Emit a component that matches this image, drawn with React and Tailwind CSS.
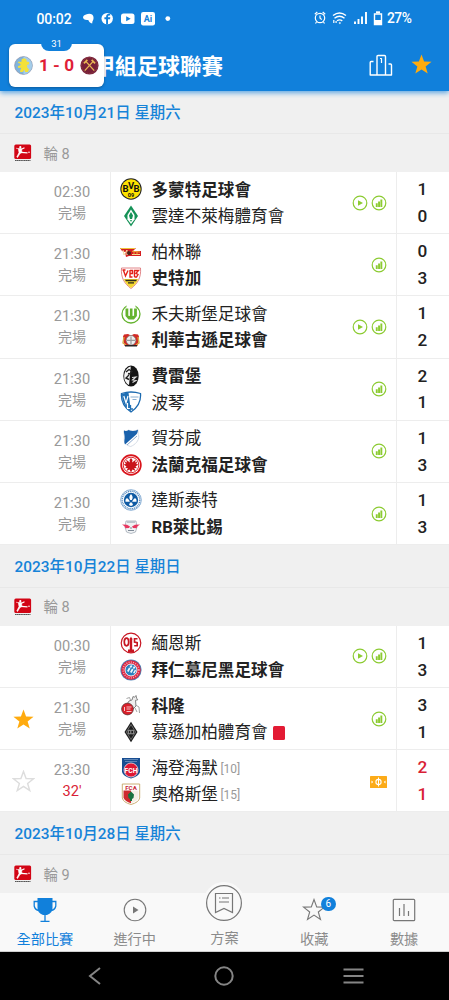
import React from "react";
import clsx from "clsx";

const STAR = "M12 1.5l2.7 7.4 7.8.2-6.2 4.9 2.2 7.5-6.5-4.4-6.5 4.4 2.2-7.5L1.5 9.1l7.8-.2z";

const sections = [
  {
    date: "2023年10月21日 星期六",
    round: "輪 8",
    matches: [
      { time: "02:30", home: ["多蒙特足球會", "dortmund", 1], away: ["雲達不萊梅體育會", "bremen", 0], video: true },
      { time: "21:30", home: ["柏林聯", "union", 0], away: ["史特加", "stuttgart", 3] },
      { time: "21:30", home: ["禾夫斯堡足球會", "wolfsburg", 1], away: ["利華古遜足球會", "leverkusen", 2], video: true },
      { time: "21:30", home: ["費雷堡", "freiburg", 2], away: ["波琴", "bochum", 1] },
      { time: "21:30", home: ["賀芬咸", "hoffenheim", 1], away: ["法蘭克福足球會", "frankfurt", 3] },
      { time: "21:30", home: ["達斯泰特", "darmstadt", 1], away: ["RB萊比錫", "leipzig", 3] },
    ],
  },
  {
    date: "2023年10月22日 星期日",
    round: "輪 8",
    matches: [
      { time: "00:30", home: ["緬恩斯", "mainz", 1], away: ["拜仁慕尼黑足球會", "bayern", 3], video: true },
      { time: "21:30", home: ["科隆", "koln", 3], away: ["慕遜加柏體育會", "gladbach", 1], star: "on", redCard: true },
      { time: "23:30", live: "32'", home: ["海登海默", "heidenheim", 2, "[10]"], away: ["奧格斯堡", "augsburg", 1, "[15]"], star: "off" },
    ],
  },
  { date: "2023年10月28日 星期六", round: "輪 9", matches: [] },
];

const logos = {
  dortmund: (
    <>
      <circle cx="11" cy="11" r="10.7" fill="#222" />
      <circle cx="11" cy="11" r="9.7" fill="#fde100" />
      <g fill="#111" fontFamily="Roboto" fontWeight="700" textAnchor="middle">
        <text x="5.5" y="14.2" fontSize="9.5">B</text>
        <text x="11" y="11.2" fontSize="9.5">V</text>
        <text x="16.5" y="14.2" fontSize="9.5">B</text>
        <text x="11" y="19.4" fontSize="5.5">09</text>
      </g>
    </>
  ),
  bremen: (
    <>
      <path d="M11 .5L18 11l-7 10.5L4 11z" fill="#159257" />
      <path d="M11 4.5L14.500 10v4.500L11 19l-3.500-4.500V10z" fill="#fff" />
      <path d="M11 7l2 3.500-1 3.500h-2l-1-3.500zM10 15l1 2 1-2z" fill="#159257" />
    </>
  ),
  union: (
    <>
      <path d="M0 7h16l-3 3h8v5H9l-3 1-1-5L2 10z" fill="#d51d20" />
      <path d="M0 7h15v1H1z" fill="#eec33c" />
      <path d="M3 9l1 5 3-5v5l3-4M12 13.5h8" stroke="#f6d9a0" strokeWidth="1" fill="none" />
      <circle cx="9" cy="12" r="2" fill="#4b221a" />
      <path d="M12 10.2l8 .8M14 11v3m3-3v3" stroke="#f4d049" strokeWidth=".8" />
    </>
  ),
  stuttgart: (
    <>
      <path d="M1.5 1h19c.8 9-2.5 15.5-9.500 20.500C4 16.500.7 10 1.500 1z" fill="#fff" stroke="#d9686c" strokeWidth=".8" />
      <path d="M3.500 3.500l2 5.500L8 3.500M2.500 3h3M10 3v7h2.500M10 3.500h2.500v3H10M14.500 3.500v6.500M14 3.500h4.500L16 6.300l2 1.200-1.500 2.500h-2" stroke="#e32219" strokeWidth="1.400" fill="none" />
      <path d="M3.800 12h14.400c-1.500 4-3.500 6.500-7.200 9-3.700-2.500-5.700-5-7.200-9z" fill="#f5d72f" />
      <path d="M5 12.700h12l-1 1.500H6zm3 2.500h6v1.300H8z" fill="#2a2a1e" />
    </>
  ),
  wolfsburg: (
    <>
      <circle cx="11" cy="11" r="9" fill="none" stroke="#64b32e" strokeWidth="1.300" />
      <path d="M6.500 1h9v3h-9z" fill="#fff" />
      <path d="M5.500 5.500h2.800v7.300l1.600.1V5.500h2.600v7.400l1.600-.2V5.500h2.800V13l-3 3.500H8.500L5.500 13z" fill="#64b32e" />
    </>
  ),
  leverkusen: (
    <>
      <path d="M4 5.500l4-.5 3 1.500L14 5l4 .5 1 2-1.500 9.500h-13L3 7.500z" fill="#d32a25" />
      <path d="M4 8l-1 6 3 2M18 8l1 6-3 2" stroke="#d8a643" strokeWidth="1.400" fill="none" />
      <circle cx="11" cy="11.300" r="4.800" fill="#eee" stroke="#777" strokeWidth=".7" />
      <path d="M11 7.500v8M7 11.300h8" stroke="#999" strokeWidth="1.200" />
      <path d="M5 16h12v1.500H5z" fill="#292323" />
    </>
  ),
  freiburg: (
    <>
      <ellipse cx="11" cy="11" rx="7.700" ry="10.500" fill="#151515" />
      <path d="M10.800 1.500L9 20C5 18 4.200 14 4.200 11s1.800-8.500 6.600-9.500z" fill="#f6f6f6" />
      <path d="M6 7l3-2.500 3 2-2.500 2.500L8 8.500M9 10l-3 3 3 1.500" fill="none" stroke="#222" strokeWidth="1.400" />
      <path d="M12 12.500l4-.5-3.500 3 3.500.5-3.500 2" fill="none" stroke="#ddd" strokeWidth="1.100" />
    </>
  ),
  bochum: (
    <>
      <path d="M1.500 2.500Q11-.5 20.500 2.500 21.500 14 11 21 .5 14 1.500 2.500z" fill="#fff" stroke="#1c6ab0" strokeWidth="1.300" />
      <path d="M2 3Q5 1.800 8.500 1.500L11 20.500Q1.500 14 2 3z" fill="#1f6fb4" />
      <path d="M3.800 5l2.200 7 2-7M7.500 12v5.500h2.500" stroke="#fff" strokeWidth="1.200" fill="none" />
      <path d="M10.500 6h8M12.500 8.500h4" stroke="#8aaed0" strokeWidth="1" />
      <path d="M10.500 14v4h2.500" stroke="#1f6fb4" strokeWidth="1.300" fill="none" />
    </>
  ),
  hoffenheim: (
    <>
      <path d="M4 3.500c2 .8 3 .8 4.500-.5 3 1.500 6 1.500 9.500-.3.400 2.800-.4 4 .8 6.300 0 5-3.500 8.500-8 10.500-4.500-1-7-3.500-6.500-8C5 9 3.500 6 4 3.500z" fill="#fff" stroke="#c6cedb" strokeWidth=".7" />
      <path d="M4 3.500c2 .8 3 .8 4.500-.5 3 1.500 6 1.500 9.500-.3-.3 3-1 3.800-2 5L5 17.500c-1-2-.6-3.500-.3-6.500C5 8 3.500 6 4 3.500z" fill="#1961ac" />
      <path d="M7 18l10-9" stroke="#8da9cd" strokeWidth="1" />
    </>
  ),
  frankfurt: (
    <>
      <circle cx="11" cy="11" r="10.700" fill="#d9141b" />
      <circle cx="11" cy="11" r="9" fill="#fff" />
      <circle cx="11" cy="11" r="7.800" fill="#fff" stroke="#d9141b" strokeWidth=".9" />
      <path d="M11 4l1.500 2-.4 2.500L16 5.500l-1 3 2.500-1.200-1.300 2.800 2.300.4-3 2 1.500 1.800-2.800-.3L15.500 17l-3-1.500L11 18.500l-1.500-3-3 1.500 1.300-3-2.800.3 1.500-1.800-3-2 2.300-.4-1.300-2.800L7 8.500l-1-3 3.900 3L9.500 6z" fill="#c9151b" />
    </>
  ),
  darmstadt: (
    <>
      <circle cx="11" cy="11" r="10.300" fill="#fff" stroke="#6b9bc9" strokeWidth=".8" />
      <circle cx="11" cy="11" r="8.800" fill="none" stroke="#5c8fc2" strokeWidth="1.400" strokeDasharray="1.200 .7" />
      <circle cx="11" cy="11" r="7.200" fill="#0f5ba4" />
      <path d="M11 5c2.200 2.500 2 4 .8 6h-1.600C9 9 8.800 7.500 11 5zM9.800 12.800H5.500c-.5-3 1.500-4.300 2.700-2.800C9 11 9.500 11.500 9.800 12.800zm2.400 0h4.300c.5-3-1.500-4.300-2.700-2.800-.8 1-1.300 1.500-1.600 2.800zM10 13.500h2l1 2.500-2 1-2-1z" fill="#fff" />
    </>
  ),
  leipzig: (
    <>
      <path d="M6 5h10l1 6-1.500 5-4.500 1.500L6.500 16 5 11z" fill="#f1f3f5" stroke="#98a2ad" strokeWidth=".7" />
      <path d="M7 5h8v2H7z" fill="#bec6cd" />
      <path d="M2 8.500l5 .3 3 1.700-1 1.500-3.500.2-1-1.900zM20 8.500l-5 .3-3 1.700 1 1.500 3.500.2 1-1.900z" fill="#e8365f" />
      <path d="M8 14.500h6M11 11v2" stroke="#7e8a97" strokeWidth="1" />
    </>
  ),
  mainz: (
    <>
      <circle cx="11" cy="11" r="9.800" fill="#fff" stroke="#c71521" strokeWidth="1.200" />
      <ellipse cx="6.500" cy="10" rx="2.200" ry="3.800" fill="none" stroke="#c71521" strokeWidth="1.700" />
      <path d="M11 6v13" stroke="#c71521" strokeWidth="2.400" />
      <path d="M9.500 7.500L11 4.500l1.500 3zM8 17.500h6v3H8z" fill="#c71521" />
      <path d="M17.500 6.800h-3v3.200l2.700.6v3.200h-3" fill="none" stroke="#c71521" strokeWidth="1.600" />
    </>
  ),
  bayern: (
    <>
      <circle cx="11" cy="11" r="10.600" fill="#4b83b8" />
      <circle cx="11" cy="11" r="9.800" fill="#dc2742" />
      <circle cx="11" cy="11" r="7.900" fill="none" stroke="#f0a9b4" strokeWidth="1.500" strokeDasharray="1 1.300" />
      <circle cx="11" cy="11" r="6" fill="#2b80be" stroke="#fff" strokeWidth=".9" />
      <path d="M7 12l2-3.500 1.500 1L8.500 13zM10 13l2-3.500 1.500 1-2 3.500zM13 14l2-3.500 1 1-1.500 3zM9.500 8l1.500-2 1.500 1L11 9zM12.800 9l1.200-2 1.500 1.500L14 10z" fill="#eef6fb" />
    </>
  ),
  koln: (
    <>
      <path d="M7.500 9.500L9 7l3-1 1-3.500 1.500.8L16 1.500l.6 2.700 1.200 1.600-2.300.5L16 12l-3 3" fill="#eee" stroke="#777" strokeWidth=".9" />
      <path d="M6.500 4.500l3-1 1 2.500M15.500 11l3.500 2 .5 6M15 14l2 4" fill="none" stroke="#999" strokeWidth=".9" />
      <circle cx="7.500" cy="15" r="5.900" fill="#d81f2a" stroke="#4b3535" strokeWidth=".7" />
      <path d="M4.500 13v4m2-4h5m-5 4.500h5M6.500 15h4" stroke="#f9c5c8" strokeWidth="1" />
    </>
  ),
  gladbach: (
    <>
      <path d="M11 .8L17.500 11 11 21.200 4.500 11z" fill="#1d1d1d" />
      <path d="M11 3.500l4.600 7.500-4.600 7.500L6.400 11z" fill="none" stroke="#888" strokeWidth=".7" />
      <path d="M8.300 9.300h2.500v3.500H8.300zm2.900 0h2.500v3.500h-2.500" stroke="#aaa" strokeWidth=".9" fill="none" />
    </>
  ),
  heidenheim: (
    <>
      <path d="M2 1h18v14q-1 4-9 6.500Q3 19 2 15z" fill="#174d91" />
      <path d="M4 2.500h14M5 4.500h12" stroke="#7d9fc7" strokeWidth=".7" />
      <circle cx="11" cy="13" r="7" fill="#df1733" stroke="#f5dce5" strokeWidth=".8" />
      <text x="11" y="15.500" fontSize="6.800" fontWeight="700" fontFamily="Roboto" textAnchor="middle" fill="#fff">FCH</text>
    </>
  ),
  augsburg: (
    <>
      <path d="M2.300 1h17.400v14q-1 4.500-8.700 6.500-7.700-2-8.700-6.500z" fill="#fff" stroke="#c5a566" strokeWidth=".9" />
      <path d="M3.500 7.500H11v12.800q-6-1.800-7.500-5.500z" fill="#ce2a2d" />
      <path d="M11 7.500h7.500v7.300Q17 18.500 11 20.300z" fill="#f5eee5" />
      <text x="11" y="6.600" fontSize="6.200" fontWeight="700" fontFamily="Roboto" textAnchor="middle" fill="#c72533">FCA</text>
      <path d="M11 8.500l3 3-.5 3.500-1.500 1v2h-2v-2l-1.500-1-.5-3.500z" fill="#19713e" />
    </>
  ),
  villa: (
    <>
      <circle cx="11" cy="11" r="10.300" fill="#80b4dd" stroke="#8d90a5" strokeWidth=".8" />
      <path d="M11 1a10 10 0 010 20z" fill="#a5cde9" />
      <path d="M9 3.500l3-1 2.500 1.500v2.500l3 .5v2.500l-2.500 1 .5 3 2 2-1.500 3h-3l-1-2.500-2 2.500H7l.5-3 1-2-3.500.5-.5-2 3.500-1.500-1.500-2-2-.5 1-1.500 3 .5z" fill="#f4e138" />
    </>
  ),
  westham: (
    <>
      <circle cx="11" cy="11" r="10.500" fill="#772038" />
      <circle cx="11" cy="11" r="9.200" fill="none" stroke="#a95f58" strokeWidth=".7" strokeDasharray="1 1" />
      <path d="M5.500 17L15.500 6M16.500 17L6.500 6" stroke="#e8b854" strokeWidth="1.500" />
      <path d="M4.500 8.500l4-4M17.500 8.500l-4-4" stroke="#e8b854" strokeWidth="2" />
    </>
  ),
};

function TeamLogo({ id, className = "w-[22px] h-[22px]" }) {
  return (
    <svg viewBox="0 0 22 22" className={clsx("shrink-0", className)}>
      {logos[id]}
    </svg>
  );
}

function LeagueLogo() {
  return (
    <svg viewBox="0 0 18 18" className="w-[18px] h-[18px] shrink-0">
      <rect x=".3" y=".5" width="16.800" height="14.500" rx="1.500" fill="#d20515" />
      <circle cx="6.300" cy="3.200" r="1.100" fill="#fff" />
      <path d="M2 4.200l2.500.6M4.300 4.500h3L8 8.500 6 9.500 3.500 13.500 2.800 13 5 8.500z" fill="#fff" stroke="#fff" strokeWidth=".6" />
      <path d="M7 5.500l3.500-1.800M7 8.300l6.500.5" stroke="#fff" strokeWidth="1.200" fill="none" />
      <circle cx="15" cy="8.200" r=".8" fill="#fff" />
      <path d="M1 16.500h15.500" stroke="#555" strokeWidth="1.200" strokeDasharray="1.500 .3" />
    </svg>
  );
}

function PlayBadge() {
  return (
    <svg viewBox="0 0 16 16" className="w-4 h-4">
      <circle cx="8" cy="8" r="6.800" fill="none" stroke="#8ccb32" strokeWidth="1.200" />
      <path d="M6 5.200L11 8l-5 2.800z" fill="#8ccb32" />
    </svg>
  );
}

function StatsBadge() {
  return (
    <svg viewBox="0 0 16 16" className="w-4 h-4">
      <circle cx="8" cy="8" r="6.800" fill="none" stroke="#8ccb32" strokeWidth="1.200" />
      <path d="M4.800 8.300h1.900v3.600H4.800zM7.100 6.500H9v5.400H7.100zM9.400 4.400h1.900v7.500H9.400z" fill="#8ccb32" />
    </svg>
  );
}

function LivePitch() {
  return (
    <svg viewBox="0 0 17 12" className="w-[17px] h-3 mt-0.5">
      <rect width="17" height="12" rx=".6" fill="#fcab18" />
      <circle cx="8.500" cy="6" r="2.600" fill="none" stroke="#fff" strokeWidth="1.100" />
      <path d="M8.500 1.500v9" stroke="#fff" strokeWidth="1" />
      <path d="M1.500 4.500v3L3.200 6zM15.500 4.500v3L13.800 6z" fill="#fff" />
    </svg>
  );
}

function StatusBar() {
  return (
    <div className="h-[38px] flex items-center pl-[36.500px] pr-9 text-white">
      <span className="text-[14px] font-medium leading-none tracking-[-0.1px]">00:02</span>
      <svg viewBox="0 0 90 16" className="w-[90px] h-4 ml-2.5" fill="#fff">
        <path d="M4 3.500c3-1.500 7-1 7.500 2.500.5 3-1.500 4-1.300 6.500C8 12 7 11 6.300 9 3 9.500 1 8 1 6.300 1 5 2.500 4 4 3.500z" />
        <circle cx="25.200" cy="7.600" r="5.700" />
        <path d="M26 13.300V8.300h2l.3-2H26c-.1-1.500.5-2 2.200-1.700V2.900C25.500 2.300 24 3.500 24.100 6.300h-1.700v2h1.700v5z" fill="#1180db" />
        <rect x="39" y="2.500" width="13.500" height="10.500" rx="2.500" />
        <path d="M44.200 5.200l4.500 2.500-4.500 2.500z" fill="#1180db" />
        <rect x="59" y="1" width="14" height="13.500" rx="2.200" />
        <text x="66" y="11" textAnchor="middle" fontFamily="Roboto" fontSize="9" fontWeight="700" fill="#1180db">Ai</text>
        <circle cx="85.800" cy="7.600" r="2.400" />
      </svg>
      <svg viewBox="0 0 70 16" className="w-[70px] h-4 ml-auto mr-[3.500px] mb-0.5" fill="none" stroke="#fff">
        <circle cx="6" cy="8" r="4.700" strokeWidth="1.200" />
        <path d="M6 5.500V8l1.700 1.700M.8 4.300L3.300 2M11.200 4.300L8.700 2M2.500 12l-1 1.500M9.500 12l1 1.500" strokeWidth="1.200" />
        <path d="M19 5.500Q25.500.5 32 5.500M20.500 8.300Q25.500 4.300 30.500 8.300M23 10.800Q25.500 9 28.300 10.800" strokeWidth="1.400" />
        <path d="M19.800 10v3m2.300-2v2" strokeWidth="1.200" />
        <circle cx="25.800" cy="13" r=".8" fill="#fff" strokeWidth=".3" />
        <path d="M41 14v-2.500M44.500 14V9M48 14V6.500M52 14V2" strokeWidth="1.900" />
        <path d="M60.500 4h7v10.500h-7z" strokeWidth="1.400" />
        <path d="M62 2.300h4" strokeWidth="2" />
        <path d="M60.800 10.500h6.500V14h-6.500z" fill="#fff" />
      </svg>
      <span className="w-[26px] text-[13.800px] font-medium leading-none tracking-[-0.5px] whitespace-nowrap">27%</span>
    </div>
  );
}

function FloatingScore() {
  return (
    <div className="absolute left-[9px] top-[44px] w-[95px] h-[43px] bg-white rounded-md shadow-[0_1px_3px_rgba(0,0,0,0.3)] flex items-center justify-between px-[5px] z-20">
      <span className="absolute left-[32px] top-[-7px] w-[31px] h-[14px] rounded-b-lg bg-[#1180db] text-white text-[9.500px] leading-[14px] text-center">
        31
      </span>
      <TeamLogo id="villa" className="w-[19px] h-[19px]" />
      <span className="text-[17.200px] font-bold text-[#e01e37] leading-none whitespace-nowrap">1 - 0</span>
      <TeamLogo id="westham" className="w-[19px] h-[19px]" />
    </div>
  );
}

function Header() {
  return (
    <header className="relative z-10 h-[91px] shrink-0 bg-[#1180db] shadow-[0_2px_5px_rgba(17,128,219,0.65)]">
      <StatusBar />
      <div className="h-[53px] flex items-center pl-[93.500px] pr-4">
        <h1 className="text-[21.600px] font-bold text-white leading-none whitespace-nowrap mt-1">甲組足球聯賽</h1>
        <svg viewBox="0 0 24 22" className="w-6 h-[22px] ml-auto" fill="none" stroke="#fff" strokeWidth="1.400" strokeLinejoin="round">
          <path d="M8 21H1.200V8.500q0-1 1-1h2.300M8 21V2.500q0-1 1-1h6.500q1 0 1 1V21M8 21h8.500M19.500 10h2q1 0 1 1v10h-6" />
          <path d="M11 4.500h1.500V9" strokeWidth="1.200" />
        </svg>
        <svg viewBox="0 0 24 24" className="w-[23px] h-[23px] ml-[17px]">
          <path d={STAR} fill="#ffab0f" />
        </svg>
      </div>
      <FloatingScore />
    </header>
  );
}

function TeamRow({ team, winner, redCard }) {
  const [name, logo, , rank] = team;
  return (
    <div className="h-[26.500px] flex items-center">
      <TeamLogo id={logo} />
      <span className={clsx("ml-[9.500px] mt-[3px] text-[16.600px] leading-none whitespace-nowrap text-[#222]", winner ? "font-bold" : "font-normal")}>
        {name}
      </span>
      {rank && <span className="ml-[2.500px] mt-0.5 text-[12px] leading-none text-[#999]">{rank}</span>}
      {redCard && <span className="ml-[5px] mt-0.5 w-[12.500px] h-[14.500px] rounded-[1.500px] bg-[#e31b34]" />}
    </div>
  );
}

function MatchRow({ match }) {
  const { time, live, home, away, video, star, redCard } = match;
  return (
    <div className="h-[62.200px] flex bg-white border-b border-[#ededed]">
      <div className="w-[34px] pl-3 flex items-center shrink-0">
        {star && (
          <svg viewBox="0 0 24 24" className="w-[23px] h-[23px] mt-px shrink-0">
            <path d={STAR} fill={star === "on" ? "#ffab0f" : "none"} stroke={star === "on" ? "none" : "#ddd"} strokeWidth="1.500" />
          </svg>
        )}
      </div>
      <div className="w-[77px] shrink-0 border-r border-[#ededed] flex flex-col items-center pt-[10px] text-[14.600px] leading-[21px] text-[#999]">
        <span>{time}</span>
        <span className={live ? "text-[#d91e36]" : "text-[14px]"}>{live || "完場"}</span>
      </div>
      <div className="flex-1 pl-[9px] pt-[4px] flex flex-col">
        <TeamRow team={home} winner={!live && home[2] > away[2]} />
        <TeamRow team={away} winner={!live && away[2] > home[2]} redCard={redCard} />
      </div>
      <div className="flex items-center gap-[3.500px] pr-[9px]">
        {video && <PlayBadge />}
        {live ? <LivePitch /> : <StatsBadge />}
      </div>
      <div className={clsx("w-[53px] shrink-0 border-l border-[#ededed] flex flex-col items-center pt-[4px] pr-px text-[17.200px] font-medium leading-[26.800px]", live ? "text-[#d91e36]" : "text-[#222]")}>
        <span>{home[2]}</span>
        <span>{away[2]}</span>
      </div>
    </div>
  );
}

function Section({ section }) {
  return (
    <section>
      <div className="h-[42.300px] flex items-center pl-[14.500px] pt-[3px] border-b border-[#e8e8e8] text-[15.400px] font-medium text-[#1683d8]">
        {section.date}
      </div>
      <div className="h-[38.400px] flex items-center pl-3.5 text-[#999]">
        <LeagueLogo />
        <span className="ml-[11.500px] mt-[3px] text-[14.500px]">{section.round}</span>
      </div>
      {section.matches.map((m) => (
        <MatchRow key={m.home[0]} match={m} />
      ))}
    </section>
  );
}

function NavItem({ label, active, children }) {
  return (
    <div className={clsx("flex-1 relative flex flex-col items-center pt-[5px]", active ? "text-[#1180db]" : "text-[#8b8b8b]")}>
      {children}
      <span className="mt-[7px] text-[14.200px] leading-[20px] whitespace-nowrap">{label}</span>
    </div>
  );
}

function BottomNav() {
  return (
    <nav className="relative z-10 h-[58.500px] shrink-0 flex bg-[#f9f9f9] border-b border-[#cfcfcf]">
      <NavItem label="全部比賽" active>
        <svg viewBox="0 0 24 24" className="w-6 h-6">
          <path d="M4.500 0h15v10q0 5-5.500 7h-4q-5.500-2-5.500-7z" fill="currentColor" />
          <path d="M5 3.500H1.200V8Q2 12 6 12.500M19 3.500h3.800V8Q22 12 18 12.500M12 16v7M7.500 23.300h9" fill="none" stroke="currentColor" strokeWidth="1.300" />
        </svg>
      </NavItem>
      <NavItem label="進行中">
        <svg viewBox="0 0 24 24" className="w-6 h-6">
          <circle cx="12" cy="12" r="10.800" fill="none" stroke="#777" strokeWidth="1.100" />
          <path d="M10 8.500l5.500 3.500-5.500 3.500z" fill="#777" />
        </svg>
      </NavItem>
      <NavItem label="方案">
        <svg viewBox="0 0 44 44" className="absolute top-[-12.500px] w-11 h-11">
          <circle cx="22" cy="22" r="21" fill="#f9f9f9" />
          <circle cx="22" cy="22" r="17.400" fill="none" stroke="#777" strokeWidth="1.200" />
          <path d="M13.500 12.500h17v19l-8.500-4-8.500 4zM17 17h1.500m1.500 0h7M17 21h10" fill="none" stroke="#777" strokeWidth="1.200" />
        </svg>
        <span className="h-[23px]" />
      </NavItem>
      <NavItem label="收藏">
        <svg viewBox="0 0 24 24" className="w-6 h-6">
          <path d={STAR} fill="none" stroke="#777" strokeWidth="1.100" />
        </svg>
        <span className="absolute left-[51.500px] top-[4px] w-[15px] h-[14px] rounded-full bg-[#1180db] text-white text-[10px] leading-[14px] text-center">
          6
        </span>
      </NavItem>
      <NavItem label="數據">
        <svg viewBox="0 0 24 24" className="w-6 h-6" fill="none" stroke="#777" strokeWidth="1.200">
          <rect x="1.300" y="1.300" width="21.400" height="21.400" rx="1" />
          <path d="M7.500 10v8M12 6v12M16.500 13v5" />
        </svg>
      </NavItem>
    </nav>
  );
}

function SystemBar() {
  return (
    <div className="h-[48.500px] shrink-0 bg-black flex items-center justify-between pl-[88px] pr-[85px]">
      <svg viewBox="0 0 14 20" className="w-3.5 h-5" fill="none" stroke="#858585" strokeWidth="2">
        <path d="M12 2L2 10l10 8" />
      </svg>
      <svg viewBox="0 0 22 22" className="w-[22px] h-[22px] ml-0.5" fill="none" stroke="#858585" strokeWidth="2">
        <circle cx="11" cy="11" r="8.700" />
      </svg>
      <svg viewBox="0 0 21 16" className="w-[21px] h-4" fill="none" stroke="#858585" strokeWidth="2">
        <path d="M.5 1.500h20M.5 8h20M.5 14.500h20" />
      </svg>
    </div>
  );
}

export default function App() {
  return (
    <div
      lang="zh-Hant"
      className="w-[449px] h-[1000px] flex flex-col overflow-hidden bg-[#f0f0f0] font-['Roboto','Noto_Sans_CJK_TC',sans-serif]"
    >
      <Header />
      <main className="flex-1 min-h-0 pt-[0.4px]">
        {sections.map((s) => (
          <Section key={s.date} section={s} />
        ))}
      </main>
      <BottomNav />
      <SystemBar />
    </div>
  );
}
